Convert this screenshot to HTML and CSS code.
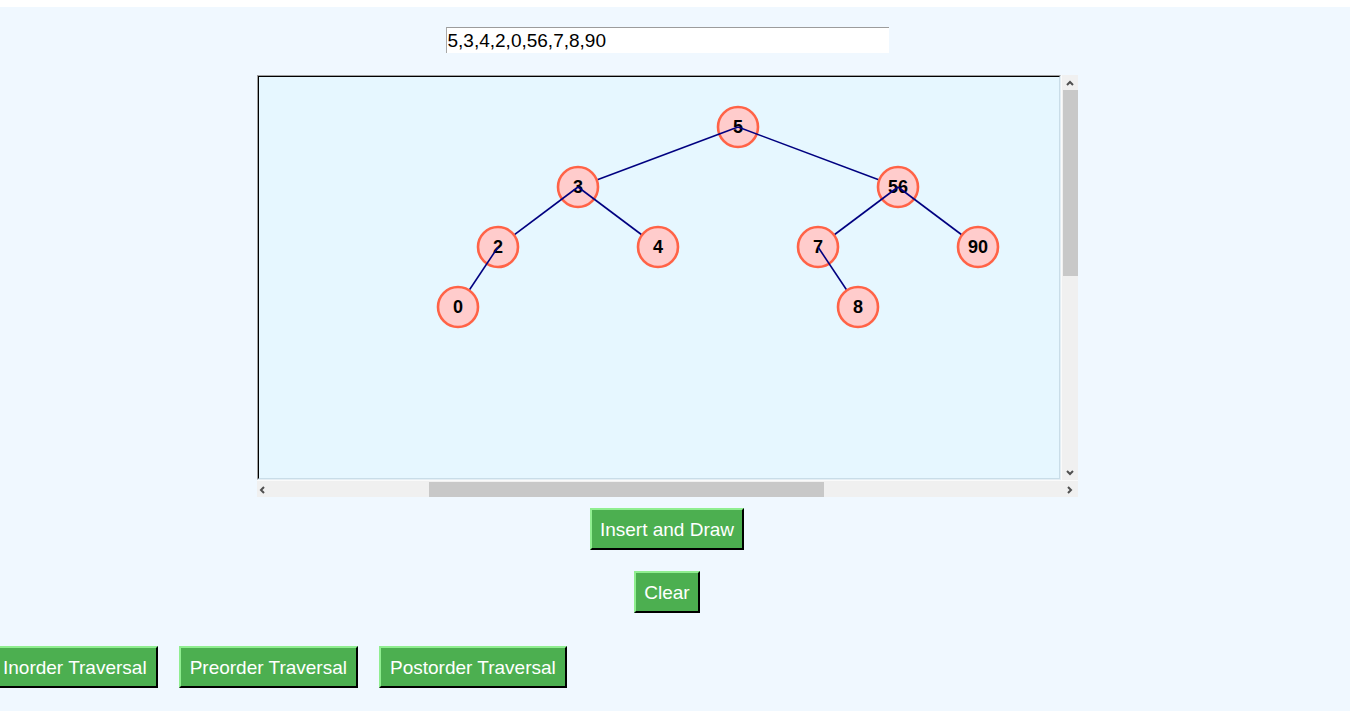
FILE: index.html
```html
<!DOCTYPE html>
<html lang="en">
<head>
<meta charset="utf-8">
<title>Binary Search Tree</title>
<link rel="stylesheet" href="styles.css">
</head>
<body>
<div class="top-strip"></div>
<main class="page">
  <input class="values" type="text" value="5,3,4,2,0,56,7,8,90">

  <div class="scrollbox">
    <div class="scroll-row">
      <div class="viewport">
        <div class="canvas-frame">
          <svg class="tree" width="800" height="401" viewBox="321 0 800 401" xmlns="http://www.w3.org/2000/svg">
            <g class="node"><circle cx="800" cy="50" r="20"/><text x="800" y="56">5</text></g>
            <line x1="800" y1="50" x2="640" y2="110"/>
            <g class="node"><circle cx="640" cy="110" r="20"/><text x="640" y="116">3</text></g>
            <line x1="640" y1="110" x2="560" y2="170"/>
            <g class="node"><circle cx="560" cy="170" r="20"/><text x="560" y="176">2</text></g>
            <line x1="560" y1="170" x2="520" y2="230"/>
            <g class="node"><circle cx="520" cy="230" r="20"/><text x="520" y="236">0</text></g>
            <line x1="640" y1="110" x2="720" y2="170"/>
            <g class="node"><circle cx="720" cy="170" r="20"/><text x="720" y="176">4</text></g>
            <line x1="800" y1="50" x2="960" y2="110"/>
            <g class="node"><circle cx="960" cy="110" r="20"/><text x="960" y="116">56</text></g>
            <line x1="960" y1="110" x2="880" y2="170"/>
            <g class="node"><circle cx="880" cy="170" r="20"/><text x="880" y="176">7</text></g>
            <line x1="880" y1="170" x2="920" y2="230"/>
            <g class="node"><circle cx="920" cy="230" r="20"/><text x="920" y="236">8</text></g>
            <line x1="960" y1="110" x2="1040" y2="170"/>
            <g class="node"><circle cx="1040" cy="170" r="20"/><text x="1040" y="176">90</text></g>
          </svg>
        </div>
      </div>
      <div class="vbar">
        <span class="arrow-box vbtn">
          <svg width="8" height="6" viewBox="0 0 8 6"><path d="M1 5 L4 2 L7 5" class="chev"/></svg>
        </span>
        <div class="vthumb" style="height:186px"></div>
        <div class="track-rest"></div>
        <span class="arrow-box vbtn">
          <svg width="8" height="6" viewBox="0 0 8 6"><path d="M1 1 L4 4 L7 1" class="chev"/></svg>
        </span>
      </div>
    </div>
    <div class="hbar">
      <span class="arrow-box hbtn-left">
        <svg width="6" height="8" viewBox="0 0 6 8"><path d="M5 1 L2 4 L5 7" class="chev"/></svg>
      </span>
      <div class="hthumb" style="margin-left:161px;width:395px"></div>
      <span class="arrow-box hbtn-right">
        <svg width="6" height="8" viewBox="0 0 6 8"><path d="M1 1 L4 4 L1 7" class="chev"/></svg>
      </span>
    </div>
  </div>

  <button class="btn btn-insert" type="button">Insert and Draw</button>
  <button class="btn btn-clear" type="button">Clear</button>

  <div class="traversals">
    <button class="btn" type="button">Inorder Traversal</button>
    <button class="btn" type="button">Preorder Traversal</button>
    <button class="btn" type="button">Postorder Traversal</button>
  </div>
</main>
</body>
</html>
```

FILE: styles.css
```css
html, body {
  margin: 0;
  padding: 0;
  background: #f0f8ff;
  font-family: "Liberation Sans", Arial, sans-serif;
}

.top-strip {
  height: 7px;
  background: #ffffff;
}

.page {
  display: flex;
  flex-direction: column;
  align-items: center;
  padding: 20px 16px 40px 0;
  background: #f0f8ff;
}

.values {
  box-sizing: border-box;
  width: 443px;
  height: 26px;
  margin: 0;
  padding: 0 1px;
  border: 0;
  border-top: 1px solid #9c9c9c;
  border-left: 1px solid #a8a8a8;
  background: #ffffff;
  font-family: "Liberation Sans", Arial, sans-serif;
  font-size: 19px;
  line-height: 22px;
  color: #000;
  outline: none;
}

.scrollbox {
  margin-top: 22px;
  width: 821px;
  display: flex;
  flex-direction: column;
}

.scroll-row {
  display: flex;
  height: 405px;
}

.viewport {
  box-sizing: border-box;
  width: 804px;
  height: 405px;
  border: 1px solid;
  border-color: #a0a0a0 #e4eef4 #e4eef4 #a0a0a0;
  overflow: hidden;
}

.canvas-frame {
  box-sizing: border-box;
  height: 100%;
  border: 1px solid;
  border-color: #000000 #c9dde8 #c9dde8 #000000;
  background: #e6f7ff;
  overflow: hidden;
}

.tree {
  display: block;
}

.tree circle {
  fill: #ffcccc;
  stroke: #ff6347;
  stroke-width: 2.6;
}

.tree text {
  font-family: "Liberation Sans", Arial, sans-serif;
  font-weight: bold;
  font-size: 18px;
  fill: #000;
  text-anchor: middle;
}

.tree line {
  stroke: #000080;
  stroke-width: 1.6;
}

.vbar {
  box-sizing: border-box;
  width: 17px;
  height: 405px;
  border-left: 1px solid #fafafa;
  padding-left: 1px;
  background: #f0f0f0;
  display: flex;
  flex-direction: column;
}

.arrow-box {
  display: flex;
  align-items: center;
  justify-content: center;
  flex: none;
}

.vbtn {
  height: 15px;
}

.vthumb {
  flex: none;
  background: #c8c8c8;
}

.track-rest {
  flex: 1;
}

.chev {
  fill: none;
  stroke: #505050;
  stroke-width: 2;
}

.hbar {
  box-sizing: border-box;
  height: 17px;
  border-top: 1px solid #fafafa;
  padding-top: 1px;
  background: #f0f0f0;
  display: flex;
}

.hbtn-left {
  width: 11px;
}

.hbtn-right {
  width: 15px;
  margin-left: auto;
}

.hthumb {
  flex: none;
  background: #c8c8c8;
}

.btn {
  box-sizing: border-box;
  height: 42px;
  margin: 0;
  padding: 9px 9px 7px;
  background: #4caf50;
  color: #ffffff;
  font-family: "Liberation Sans", Arial, sans-serif;
  font-size: 19px;
  line-height: 22px;
  border: 2px solid;
  border-color: #90ee90 #000000 #000000 #90ee90;
  cursor: pointer;
}

.btn-insert {
  margin-top: 11px;
  padding: 9px 8px 7px;
}

.btn-clear {
  margin-top: 21px;
  padding: 9px 8px 7px;
}

.traversals {
  align-self: flex-start;
  margin-top: 33px;
  margin-left: -8px;
  display: flex;
  gap: 21px;
}
```
